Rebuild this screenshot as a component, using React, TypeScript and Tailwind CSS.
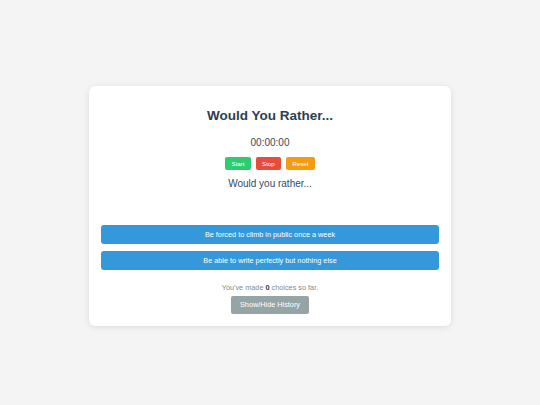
import { useState } from "react";

const OPTIONS = [
  "Be forced to climb in public once a week",
  "Be able to write perfectly but nothing else",
];

export default function App() {
  const [choices, setChoices] = useState(0);
  const [showHistory, setShowHistory] = useState(false);

  return (
    <div className="min-h-[405px] bg-[#f4f4f4] flex flex-col items-center pt-[86px] font-['Liberation_Sans',Arial,sans-serif]">
      <div className="w-[362px] bg-white rounded-[6px] shadow-[0_1px_6px_rgba(0,0,0,0.1)] px-[12px] pt-[22px] pb-[12px] flex flex-col items-center">
        <h1 className="text-[13.5px] leading-[16px] font-bold text-[#2c3e50]">Would You Rather...</h1>

        <div className="mt-[13px] text-[10px] leading-[12px] text-[#34495e]">00:00:00</div>

        <div className="mt-[8px] flex gap-[4.5px]">
          <button className="h-[13px] px-[6.5px] rounded-[2px] bg-[#2ecc71] text-white text-[6.2px] leading-[13px]">Start</button>
          <button className="h-[13px] px-[6.5px] rounded-[2px] bg-[#e74c3c] text-white text-[6.2px] leading-[13px]">Stop</button>
          <button className="h-[13px] px-[6.5px] rounded-[2px] bg-[#f39c12] text-white text-[6.2px] leading-[13px]">Reset</button>
        </div>

        <div className="mt-[8px] text-[10px] leading-[12px] text-[#34495e]">Would you rather...</div>

        <div className="mt-[35px] w-full flex flex-col gap-[6.5px]">
          {OPTIONS.map((o) => (
            <button
              key={o}
              onClick={() => setChoices(choices + 1)}
              className="w-full h-[19px] rounded-[3px] bg-[#3498db] text-white text-[7.3px] leading-[19px]"
            >
              {o}
            </button>
          ))}
        </div>

        <div className="mt-[13.5px] text-[7.3px] leading-[9px] text-[#7f8c8d]">
          You've made <span className="font-bold text-[#2c3e50]">{choices}</span> choices so far.
        </div>

        <button
          onClick={() => setShowHistory(!showHistory)}
          className="mt-[3.5px] h-[18.5px] px-[9.3px] rounded-[2px] bg-[#95a5a6] text-white text-[7.3px] leading-[18.5px]"
        >
          Show/Hide History
        </button>
      </div>
    </div>
  );
}
